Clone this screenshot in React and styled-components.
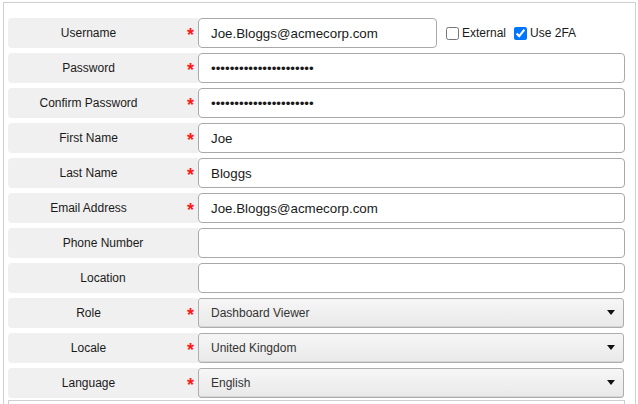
import React from 'react'
import styled, { createGlobalStyle } from 'styled-components'

const GlobalStyle = createGlobalStyle`
  body {
    margin: 0;
    background: #fff;
    font-family: "Liberation Sans", Arial, sans-serif;
    overflow: hidden;
  }
`

const rows = [
  { label: 'Username', required: true, type: 'text', value: 'Joe.Bloggs@acmecorp.com', extras: true },
  { label: 'Password', required: true, type: 'password', value: 'xxxxxxxxxxxxxxxxxxxxxx' },
  { label: 'Confirm Password', required: true, type: 'password', value: 'xxxxxxxxxxxxxxxxxxxxxx' },
  { label: 'First Name', required: true, type: 'text', value: 'Joe' },
  { label: 'Last Name', required: true, type: 'text', value: 'Bloggs' },
  { label: 'Email Address', required: true, type: 'text', value: 'Joe.Bloggs@acmecorp.com' },
  { label: 'Phone Number', type: 'text', value: '' },
  { label: 'Location', type: 'text', value: '' },
  { label: 'Role', required: true, options: ['Dashboard Viewer', 'Dashboard Editor', 'Administrator'] },
  { label: 'Locale', required: true, options: ['United Kingdom', 'United States'] },
  { label: 'Language', required: true, options: ['English', 'French', 'German'] },
]

const App = () => (
  <>
    <GlobalStyle />
    <Panel>
      <Form>
        {rows.map(row => (
          <React.Fragment key={row.label}>
            <Label>
              <LabelText>{row.label}</LabelText>
              {row.required && <Required>*</Required>}
            </Label>
            <Field>
              {row.options ? (
                <SelectWrap>
                  <Select defaultValue={row.options[0]}>
                    {row.options.map(o => <option key={o}>{o}</option>)}
                  </Select>
                  <Arrow />
                </SelectWrap>
              ) : (
                <Input type={row.type} defaultValue={row.value} $narrow={row.extras} />
              )}
              {row.extras && (
                <>
                  <Check>
                    <input type="checkbox" />
                    External
                  </Check>
                  <Check>
                    <input type="checkbox" defaultChecked />
                    Use 2FA
                  </Check>
                </>
              )}
            </Field>
          </React.Fragment>
        ))}
      </Form>
      <NextSection />
    </Panel>
  </>
)

const Panel = styled.div`
  margin: 2px 0 0 3px;
  width: 633px;
  box-sizing: border-box;
  border: 1px solid #cfcfcf;
  padding: 15px 10px 20px 4px;
`

const Form = styled.div`
  display: grid;
  grid-template-columns: 190px 1fr;
  row-gap: 5px;
`

const Label = styled.div`
  display: flex;
  align-items: center;
  height: 30px;
  background: #f0f0f0;
  border-radius: 4px 0 0 4px;
  color: #1a1a1a;
  font-size: 12px;
`

const LabelText = styled.span`
  flex: 1;
  text-align: center;
`

const Required = styled.span`
  width: 29px;
  box-sizing: border-box;
  padding: 4px 4px 0 0;
  text-align: right;
  color: #ff1a1a;
  font-size: 18px;
  font-weight: bold;
  line-height: 1;
`

const Field = styled.div`
  display: flex;
  align-items: center;
  height: 30px;
`

const Input = styled.input`
  box-sizing: border-box;
  width: ${p => (p.$narrow ? '239px' : '427px')};
  height: 30px;
  margin: 0;
  padding: 0 12px;
  border: 1px solid #a9a9a9;
  border-radius: 4px;
  font-family: "Liberation Sans", Arial, sans-serif;
  font-size: 13.33px;
  color: #1a1a1a;
  background: #fff;
  outline: none;
`

const Check = styled.label`
  display: flex;
  align-items: center;
  font-size: 12px;
  color: #1a1a1a;
  margin-left: 5px;

  input {
    margin: 0 3px 0 4px;
    width: 13px;
    height: 13px;
  }

  & + & {
    margin-left: 4px;
  }
`

const SelectWrap = styled.div`
  position: relative;
  width: 426px;
  height: 30px;
`

const Select = styled.select`
  appearance: none;
  box-sizing: border-box;
  width: 100%;
  height: 30px;
  margin: 0;
  padding: 0 0 0 12px;
  border: 1px solid #adadad;
  border-radius: 3px;
  background: linear-gradient(#f6f6f6, #e9e9e9);
  box-shadow: inset 0 -1px 0 #d6d6d6;
  font-family: "Liberation Sans", Arial, sans-serif;
  font-size: 12px;
  color: #333;
  outline: none;
`

const Arrow = styled.span`
  position: absolute;
  right: 9px;
  top: 12px;
  width: 0;
  height: 0;
  border-left: 4px solid transparent;
  border-right: 4px solid transparent;
  border-top: 5px solid #111;
  pointer-events: none;
`

const NextSection = styled.div`
  margin-top: 2px;
  height: 40px;
  border: 1px solid #cfcfcf;
  background: #fff;
`

export default App
